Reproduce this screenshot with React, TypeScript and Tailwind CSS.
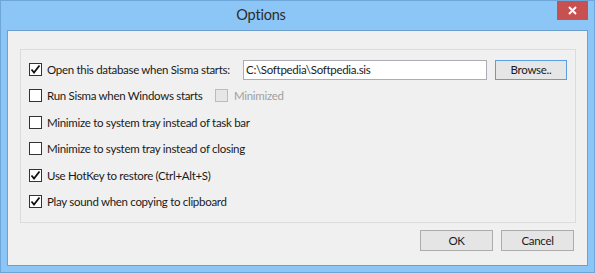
import React from "react";

const font = { fontFamily: 'Lato, "Liberation Sans", Arial, sans-serif' };

function Check({ checked, disabled }: { checked?: boolean; disabled?: boolean }) {
  return (
    <div
      className={
        "w-[13px] h-[13px] shrink-0 border flex items-center justify-center " +
        (disabled ? "border-[#bcbcbc] bg-[#e6e6e6]" : "border-[#333333] bg-white")
      }
    >
      {checked && (
        <svg width="11" height="11" viewBox="0 0 11 11">
          <path d="M1.5 5.5 L4 8.5 L9.5 1.5" fill="none" stroke="#111" strokeWidth="1.8" />
        </svg>
      )}
    </div>
  );
}

const txt = "text-[11.5px] tracking-[-0.3px] text-[#1a1a1a] whitespace-nowrap";

function Row({ checked, label, className }: { checked?: boolean; label: string; className?: string }) {
  return (
    <div className={"flex items-center h-[13px] " + (className ?? "")}>
      <Check checked={checked} />
      <span className={"ml-[5px] leading-[13px] " + txt}>{label}</span>
    </div>
  );
}

export default function App() {
  return (
    <div
      style={font}
      className="relative w-[595px] h-[273px] bg-[#8bc6f7] border border-[#6ea6d9] flex flex-col overflow-hidden"
    >
      <div className="h-[29px] flex items-start shrink-0">
        <div className="flex-1 flex justify-center pt-[5px] pr-[36px]">
          <span className="text-[14.5px] tracking-[-0.2px] leading-[18px] text-[#2b2b2b]">Options</span>
        </div>
        <div className="w-[31px] h-[20px] bg-[#c75050] flex items-center justify-center mr-[6px] mt-[-1px]">
          <svg width="9" height="9" viewBox="0 0 9 9">
            <path d="M1 1 L8 8 M8 1 L1 8" stroke="#fff" strokeWidth="2" />
          </svg>
        </div>
      </div>
      <div className="mx-[6px] h-[236px] border border-[#6f9fcc] bg-[#f0f0f0] flex flex-col">
        <div className="ml-[12px] mt-[18px] w-[556px] h-[174px] border border-[#dcdcdc] flex flex-col pl-[8px]">
          <div className="flex items-center h-[21px] mt-[9px]">
            <Check checked />
            <span className={"ml-[5px] w-[196px] shrink-0 " + txt}>
              Open this database when Sisma starts:
            </span>
            <div className={"w-[244px] h-[20px] border border-[#abadb3] bg-white flex items-center pl-[2px] mt-[1px] " + txt}>
              C:\Softpedia\Softpedia.sis
            </div>
            <div className={"ml-[8px] w-[72px] h-[20px] border border-[#5b9fe0] bg-[#e6e6e6] flex items-center justify-center " + txt}>
              Browse..
            </div>
          </div>
          <div className="flex items-center h-[13px] mt-[9px]">
            <Check />
            <span className={"ml-[5px] w-[168px] shrink-0 " + txt}>Run Sisma when Windows starts</span>
            <Check disabled />
            <span className="ml-[6px] text-[11.5px] tracking-[-0.3px] text-[#a0a0a0] whitespace-nowrap">Minimized</span>
          </div>
          <Row label="Minimize to system tray instead of task bar" className="mt-[14px]" />
          <Row label="Minimize to system tray instead of closing" className="mt-[13px]" />
          <Row checked label="Use HotKey to restore (Ctrl+Alt+S)" className="mt-[14px]" />
          <Row checked label="Play sound when copying to clipboard" className="mt-[13px]" />
        </div>
        <div className="flex justify-end mt-[7px] mr-[13px] gap-[8px]">
          <div className={"w-[73px] h-[21px] border border-[#acacac] bg-[#e5e5e5] flex items-center justify-center " + txt}>
            OK
          </div>
          <div className={"w-[73px] h-[21px] border border-[#acacac] bg-[#e5e5e5] flex items-center justify-center " + txt}>
            Cancel
          </div>
        </div>
      </div>
    </div>
  );
}
